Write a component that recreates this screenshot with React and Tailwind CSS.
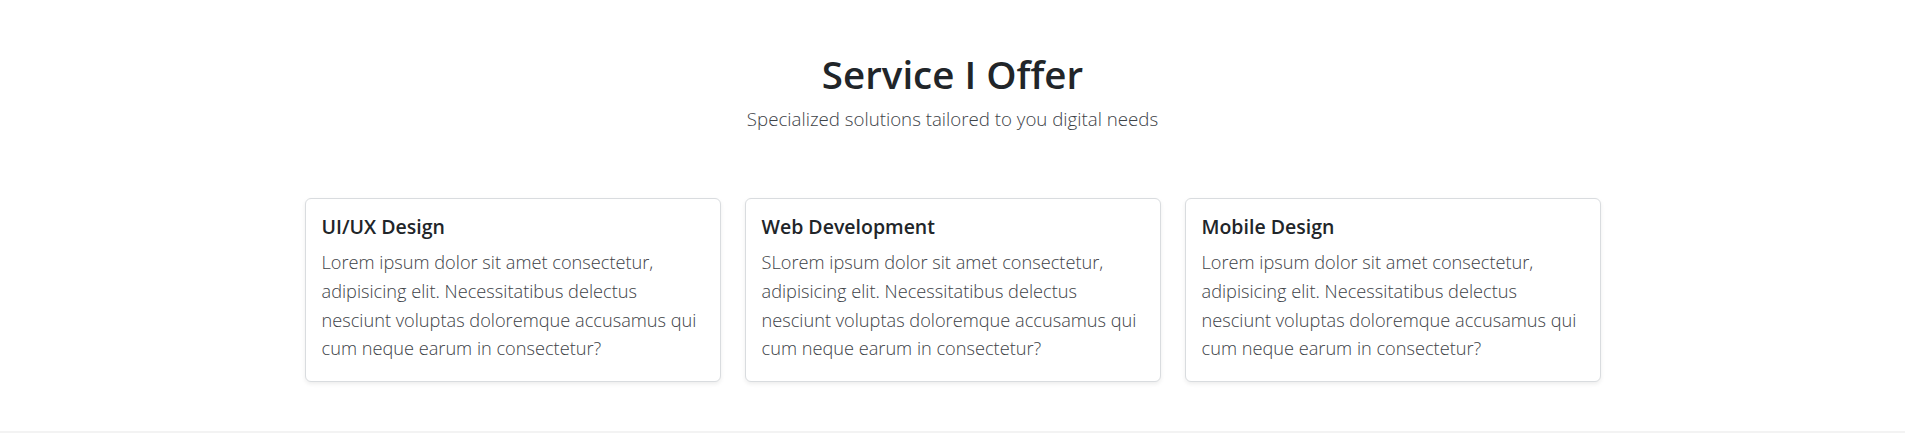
const services = [
  {
    title: "UI/UX Design",
    text: "Lorem ipsum dolor sit amet consectetur, adipisicing elit. Necessitatibus delectus nesciunt voluptas doloremque accusamus qui cum neque earum in consectetur?",
  },
  {
    title: "Web Development",
    text: "SLorem ipsum dolor sit amet consectetur, adipisicing elit. Necessitatibus delectus nesciunt voluptas doloremque accusamus qui cum neque earum in consectetur?",
  },
  {
    title: "Mobile Design",
    text: "Lorem ipsum dolor sit amet consectetur, adipisicing elit. Necessitatibus delectus nesciunt voluptas doloremque accusamus qui cum neque earum in consectetur?",
  },
];

function ServiceCard({ title, text }) {
  return (
    <div className="bg-white border border-[#d9dcdf] rounded-md shadow-[0_2px_4px_rgba(0,0,0,0.075)] p-4 pb-[18px]">
      <h5 className="text-[19.5px] leading-[24px] font-semibold text-[#212529] mb-[9px]">{title}</h5>
      <p className="text-[18.2px] leading-[28.8px] font-light text-[#3d4247]">{text}</p>
    </div>
  );
}

export default function App() {
  return (
    <div className="min-h-[433px] bg-white font-['Open_Sans',sans-serif]">
      <section className="pt-[50px] h-[431px]">
        <div className="text-center">
          <h2 className="text-[38.5px] leading-[48px] font-semibold text-[#212529]">Service I Offer</h2>
          <p className="mt-[6px] text-[18.7px] leading-[30px] font-light text-[#3d4247]">
            Specialized solutions tailored to you digital needs
          </p>
        </div>
        <div className="mx-auto mt-[64px] w-[1320px] grid grid-cols-3">
          {services.map((s) => (
            <div key={s.title} className="px-3">
              <ServiceCard title={s.title} text={s.text} />
            </div>
          ))}
        </div>
      </section>
      <div className="h-[2px] bg-[#f3f3f3]" />
    </div>
  );
}
